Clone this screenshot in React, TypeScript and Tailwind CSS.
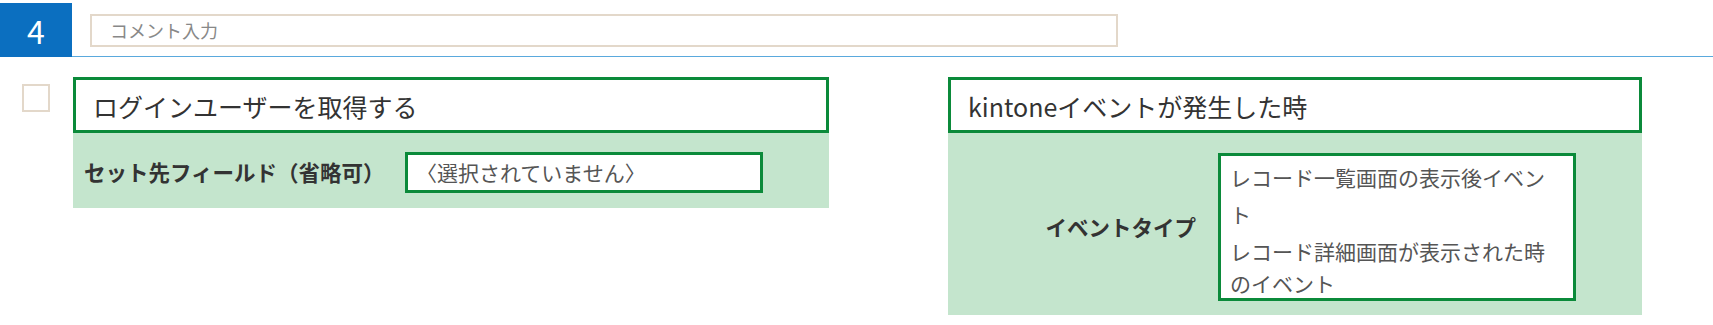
import React from "react";

const green = "border-[#0b8a3a]";

function Panel({ title, children, width }: { title: string; children: React.ReactNode; width: string }) {
  return (
    <section className={`${width} shrink-0`}>
      <div className={`h-[56px] border-[3px] ${green} bg-white flex items-center pl-[17px] pt-[3px] text-[25px] text-[#333]`}>
        {title}
      </div>
      <div className="bg-[#c4e5cd]">{children}</div>
    </section>
  );
}

export default function App() {
  return (
    <div className="w-[1713px] h-[325px] bg-white font-['Noto_Sans_CJK_JP','Noto_Sans',sans-serif] overflow-hidden">
      {/* header: step number + comment */}
      <div className="flex h-[54px] mt-[3px]">
        <div className="w-[72px] shrink-0 bg-[#0b6fc0] flex items-center justify-center text-white text-[32px] leading-none">
          4
        </div>
        <div className="flex-1 border-b border-[#5aa9dd] flex items-center pl-[18px] pt-[2px]">
          <div className="w-[1028px] h-[33px] border-2 border-[#e3d8ca] flex items-center pl-[18px] text-[18px] text-[#888]">
            コメント入力
          </div>
        </div>
      </div>

      {/* body */}
      <div className="flex items-start mt-[20px] pl-[22px]">
        <div className="w-[28px] h-[28px] shrink-0 mt-[7px] border-2 border-[#e3d8ca] bg-white" />

        <div className="ml-[23px]">
          <Panel title="ログインユーザーを取得する" width="w-[756px]">
            <div className="flex items-center pt-[19px] pb-[15px]">
              <div className="w-[332px] pl-[11px] text-[21.5px] font-bold text-[#333]">セット先フィールド（省略可）</div>
              <div className={`w-[358px] h-[41px] border-[3px] ${green} bg-white flex items-center pl-[8px] text-[21px] text-[#555]`}>
                〈選択されていません〉
              </div>
            </div>
          </Panel>
        </div>

        <div className="ml-[119px]">
          <Panel title="kintoneイベントが発生した時" width="w-[694px]">
            <div className="flex items-center pt-[20px] pb-[14px]">
              <div className="w-[270px] pr-[22px] text-right text-[21.5px] font-bold text-[#333]">イベントタイプ</div>
              <div className={`w-[358px] h-[148px] border-[3px] ${green} bg-white overflow-hidden px-[9px] pt-[3px] text-[21px] text-[#555]`}>
                <div className="leading-[37px]">レコード一覧画面の表示後イベント</div>
                <div className="leading-[32px] pt-[2px]">レコード詳細画面が表示された時のイベント</div>
              </div>
            </div>
          </Panel>
        </div>
      </div>
    </div>
  );
}
